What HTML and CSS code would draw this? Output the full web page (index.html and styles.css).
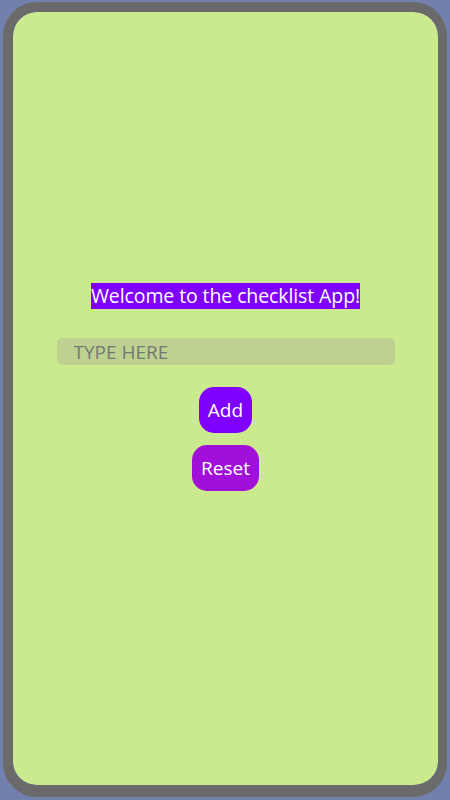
FILE: index.html
```html
<!DOCTYPE html>
<html>
<head>
    <title>Checklist App</title>
    <link rel="stylesheet" href="styles.css">
</head>
<body>
    <div class="phone">
        <div class="screen">
            <h1 class="title">Welcome to the checklist App!</h1>
            <input type="text" class="item-input" placeholder="TYPE HERE">
            <button class="btn btn-add">Add</button>
            <button class="btn btn-reset">Reset</button>
        </div>
    </div>
</body>
</html>
```

FILE: styles.css
```css
* {
    box-sizing: border-box;
}
body {
    margin: 0;
    padding: 2px 3px 3px 3px;
    height: 800px;
    background-color: #7180ad;
    font-family: "Open Sans", sans-serif;
}
.phone {
    height: 100%;
    border: 10px solid #6a6a6a;
    border-right-width: 9px;
    border-bottom-width: 12px;
    border-radius: 34px;
    overflow: hidden;
}
.screen {
    height: 100%;
    background-color: #cbea8e;
    border-radius: 24px;
    display: flex;
    flex-direction: column;
    align-items: center;
    padding-top: 271px;
}
.title {
    margin: 0;
    padding: 0;
    font-size: 19.5px;
    font-weight: normal;
    line-height: 26px;
    letter-spacing: -0.1px;
    color: #ffffff;
    background-color: #8000ff;
}
.item-input {
    margin-top: 29px;
    width: 338px;
    height: 27px;
    border: none;
    border-radius: 5px;
    padding: 0 17px;
    background-color: #bed191;
    font-family: "Open Sans", sans-serif;
    font-size: 19px;
    color: #333;
    outline: none;
}
.item-input::placeholder {
    color: #707a70;
}
.btn {
    height: 46px;
    border: none;
    border-radius: 15px;
    color: #ffffff;
    font-family: "Open Sans", sans-serif;
    font-size: 19px;
    padding: 0 9px;
    cursor: pointer;
}
.btn-add {
    margin-top: 22px;
    background-color: #8000ff;
}
.btn-reset {
    margin-top: 12px;
    background-color: #a010d8;
}
```
